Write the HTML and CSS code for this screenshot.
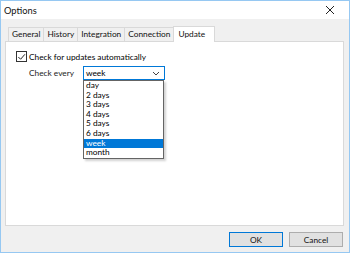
FILE: index.html
```html
<!DOCTYPE html>
<html lang="en">
  <head>
    <meta charset="utf-8">
    <title>Options</title>
    <link rel="stylesheet" href="styles.css">
  </head>
  <body>
    <div class="window">
      <div class="titlebar">
        <span class="title">Options</span>
        <svg class="close" width="10" height="10" viewBox="0 0 10 10">
          <path d="M1 1 L9 9 M9 1 L1 9" stroke="#222" stroke-width="1" fill="none"/>
        </svg>
      </div>
      <div class="content">
        <div class="tabs">
          <div class="tab">General</div>
          <div class="tab">History</div>
          <div class="tab">Integration</div>
          <div class="tab">Connection</div>
          <div class="tab active">Update</div>
        </div>
        <div class="panel">
          <label class="check-row">
            <span class="checkbox">
              <svg width="10" height="10" viewBox="0 0 10 10">
                <path d="M1.5 5 L4 7.5 L8.8 2" stroke="#222" stroke-width="1.1" fill="none"/>
              </svg>
            </span>
            Check for updates automatically
          </label>
          <div class="every-row">
            <span class="every-label">Check every</span>
            <div class="combo-wrap">
              <div class="combo">
                <span>week</span>
                <svg width="8" height="5" viewBox="0 0 8 5">
                  <path d="M1 1 L4 4 L7 1" stroke="#444" stroke-width="1" fill="none"/>
                </svg>
              </div>
              <ul class="dropdown">
                <li>day</li>
                <li>2 days</li>
                <li>3 days</li>
                <li>4 days</li>
                <li>5 days</li>
                <li>6 days</li>
                <li class="selected">week</li>
                <li>month</li>
              </ul>
            </div>
          </div>
        </div>
        <div class="buttons">
          <button class="btn default">OK</button>
          <button class="btn">Cancel</button>
        </div>
      </div>
    </div>
  </body>
</html>
```

FILE: styles.css
```css
* {
  box-sizing: border-box
}

body {
  margin: 0;
  padding: 0;
  font-family: 'Lato', 'Noto Sans', sans-serif;
  font-size: 8.3px;
  color: #000;
}

.window {
  width: 350px;
  height: 253px;
  border: 1px solid #96c8f2;
  display: flex;
  flex-direction: column;
  background: #f0f0f0;
}

.titlebar {
  height: 18px;
  background: #fff;
  display: flex;
  align-items: center;
  justify-content: space-between;
  padding: 0 14px 0 3px;
}

.title {
  font-size: 9.3px;
  color: #111;
}

.content {
  flex: 1;
  padding: 6px 5px 0 4px;
  display: flex;
  flex-direction: column;
}

.tabs {
  display: flex;
  align-items: flex-end;
  padding-left: 3px;
  height: 16px;
}

.tab {
  height: 14px;
  line-height: 12px;
  padding: 0 3px;
  border: 1px solid #d9d9d9;
  border-bottom: none;
  border-right: none;
  background: #f0f0f0;
  color: #111;
}

.tab.active {
  height: 16px;
  line-height: 14px;
  background: #fff;
  border-right: 1px solid #d9d9d9;
  margin-bottom: -1px;
  padding: 0 9px 0 4px;
  position: relative;
  z-index: 1;
}

.panel {
  height: 185px;
  background: #fff;
  border: 1px solid #d9d9d9;
  padding: 9px 10px;
}

.check-row {
  display: flex;
  align-items: center;
  gap: 2px;
  height: 11px;
}

.checkbox {
  width: 11px;
  height: 11px;
  border: 1px solid #333;
  display: flex;
  align-items: center;
  justify-content: center;
  background: #fff;
}

.every-row {
  display: flex;
  margin-top: 4px;
  padding-left: 13px;
}

.every-label {
  width: 54px;
  line-height: 14px;
  color: #222;
}

.combo-wrap {
  width: 82px;
}

.combo {
  height: 14px;
  border: 1px solid #0078d7;
  display: flex;
  align-items: center;
  justify-content: space-between;
  padding: 0 4px 0 2px;
  background: #fff;
}

.dropdown {
  list-style: none;
  margin: 0;
  padding: 0;
  border: 1px solid #646464;
  background: #fff;
  box-shadow: 2px 2px 2px rgba(0, 0, 0, 0.18);
  width: 81px;
}

.dropdown li {
  height: 9.6px;
  line-height: 9.6px;
  padding-left: 2px;
}

.dropdown li.selected {
  background: #0078d7;
  color: #fff;
}

.buttons {
  display: flex;
  justify-content: flex-end;
  gap: 6px;
  margin-top: 6px;
  padding-right: 1px;
}

.btn {
  width: 54px;
  height: 15px;
  font-family: inherit;
  font-size: 8.3px;
  background: #e1e1e1;
  border: 1px solid #adadad;
  padding: 0;
  color: #111;
}

.btn.default {
  border: 1px solid #0078d7;
}
```
